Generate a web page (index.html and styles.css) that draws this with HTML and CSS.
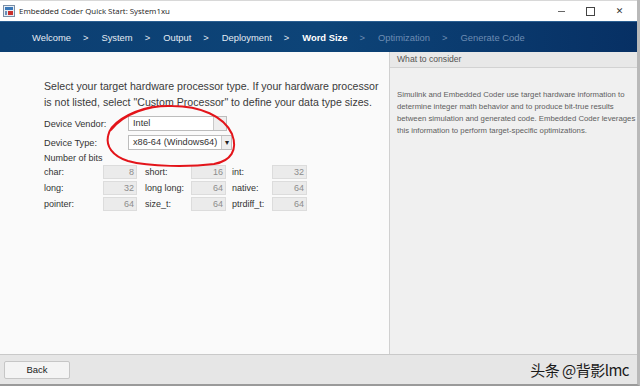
FILE: index.html
```html
<!DOCTYPE html>
<html>
<head>
<meta charset="utf-8">
<link rel="stylesheet" href="styles.css">
</head>
<body>
<div class="window">
  <div class="titlebar">
    <svg class="appicon" width="12" height="12" viewBox="0 0 12 12">
      <rect x="0.5" y="0.5" width="11" height="11" fill="#e8eef5" stroke="#7a8ea6"/>
      <rect x="2" y="2" width="8" height="3" fill="#3a78b8"/>
      <rect x="5" y="6" width="5" height="4" fill="#c9302c"/>
      <rect x="2" y="6" width="2" height="4" fill="#6a8fb8"/>
    </svg>
    <span class="title">Embedded Coder Quick Start: System1xu</span>
    <div class="winctl">
      <span class="ctl min"></span>
      <span class="ctl max"></span>
      <span class="ctl close">✕</span>
    </div>
  </div>
  <div class="nav">
    <span class="step">Welcome</span><span class="sep">&gt;</span>
    <span class="step">System</span><span class="sep">&gt;</span>
    <span class="step">Output</span><span class="sep">&gt;</span>
    <span class="step">Deployment</span><span class="sep">&gt;</span>
    <span class="step current">Word Size</span><span class="sep dim">&gt;</span>
    <span class="step dim">Optimization</span><span class="sep dim">&gt;</span>
    <span class="step dim">Generate Code</span>
  </div>
  <div class="main">
    <div class="left">
      <p class="intro">Select your target hardware processor type. If your hardware processor is not listed, select "Custom Processor" to define your data type sizes.</p>
      <div class="row">
        <span class="lbl">Device Vendor:</span>
        <span class="select vendor"><span class="val">Intel</span><span class="arrow"></span></span>
      </div>
      <div class="row">
        <span class="lbl">Device Type:</span>
        <span class="select dtype"><span class="val">x86-64 (Windows64)</span><span class="arrow">▾</span></span>
      </div>
      <div class="bits-title">Number of bits</div>
      <div class="bits">
        <span class="bl">char:</span><span class="box">8</span>
        <span class="bl c2">short:</span><span class="box">16</span>
        <span class="bl c3">int:</span><span class="box">32</span>
        <span class="bl">long:</span><span class="box">32</span>
        <span class="bl c2">long long:</span><span class="box">64</span>
        <span class="bl c3">native:</span><span class="box">64</span>
        <span class="bl">pointer:</span><span class="box">64</span>
        <span class="bl c2">size_t:</span><span class="box">64</span>
        <span class="bl c3">ptrdiff_t:</span><span class="box">64</span>
      </div>
    </div>
    <div class="right">
      <div class="rhead">What to consider</div>
      <p class="rtext">Simulink and Embedded Coder use target hardware information to determine integer math behavior and to produce bit-true results between simulation and generated code. Embedded Coder leverages this information to perform target-specific optimizations.</p>
    </div>
  </div>
  <div class="footer">
    <button class="back">Back</button>
    <span class="watermark">头条 @背影lmc</span>
  </div>
  <svg class="scribble" width="640" height="386" viewBox="0 0 640 386">
    <path d="M111,130 C124,113 150,105 172,106 C200,106 224,116 232,134 C238,150 231,161 214,164 C190,167 150,167 128,161 C112,156 106,146 108,136 C110,124 128,112 152,107" fill="none" stroke="#e3141a" stroke-width="2" stroke-linecap="round"/>
  </svg>
</div>
</body>
</html>
```
FILE: styles.css
```css
* { box-sizing: border-box; }
html, body { margin: 0; padding: 0; }
body {
  width: 640px;
  height: 386px;
  overflow: hidden;
  font-family: "Liberation Sans", Arial, sans-serif;
  background: #ffffff;
}
.window {
  position: relative;
  width: 640px;
  height: 386px;
  display: flex;
  flex-direction: column;
  border-right: 3px solid #b9b9b9;
  border-bottom: 2px solid #9a9a9a;
}
.titlebar {
  height: 21px;
  flex: none;
  display: flex;
  align-items: center;
  padding-left: 3px;
  background: #ffffff;
  border-top: 1px solid #d8d8d8;
}
.appicon { flex: none; }
.title {
  margin-left: 4px;
  font-family: "Open Sans", "Noto Sans", sans-serif;
  font-size: 7.9px;
  color: #222;
}
.winctl {
  margin-left: auto;
  display: flex;
  align-items: center;
  height: 100%;
}
.ctl {
  width: 29px;
  display: flex;
  justify-content: center;
  align-items: center;
  color: #333;
}
.ctl.min::before { content: ""; width: 7px; height: 1px; background: #666; display: block; }
.ctl.max::before { content: ""; width: 7px; height: 7px; border: 1px solid #444; display: block; }
.ctl.close { font-size: 9px; margin-right: 3px; font-family: "DejaVu Sans", sans-serif; }
.nav {
  height: 31px;
  flex: none;
  display: flex;
  align-items: center;
  padding-left: 32px;
  background: linear-gradient(90deg, #0c3f72 0%, #0d4478 50%, #073064 100%);
  border-top: 1px solid #2b5f92;
  font-size: 9.4px;
  color: #e4ebf3;
}
.step { white-space: nowrap; }
.sep { margin: 0 13px 0 12px; }
.current { font-weight: bold; color: #ffffff; }
.dim { color: #6d8db3; }
.main {
  flex: 1;
  display: flex;
  min-height: 0;
  border-bottom: 1px solid #c9c9c9;
}
.left {
  width: 389px;
  flex: none;
  background: #fafafa;
  padding: 26px 0 0 44px;
  color: #333;
}
.intro {
  margin: 0 0 4px 0;
  font-size: 10.6px;
  line-height: 16px;
  width: 340px;
  color: #3a3a3a;
}
.row {
  display: flex;
  align-items: center;
  height: 19px;
  font-size: 9.2px;
}
.lbl { width: 84px; color: #333; white-space: nowrap; }
.select {
  display: flex;
  align-items: stretch;
  height: 15px;
  border: 1px solid #bdbdbd;
  background: #fff;
  font-size: 9.2px;
  white-space: nowrap;
}
.select .val { padding: 0 4px; line-height: 13px; }
.select .arrow {
  width: 13px;
  border-left: 1px solid #c9c9c9;
  background: #eeeeee;
  font-size: 8px;
  text-align: center;
  line-height: 13px;
  color: #222;
}
.vendor { width: 99px; }
.vendor .val { flex: 1; }
.dtype { width: 104px; }
.dtype .val { flex: 1; }
.bits-title {
  margin-top: 1px;
  font-size: 9px;
  line-height: 11px;
}
.bits {
  display: grid;
  grid-template-columns: 59px 34px 54px 35px 46px 35px;
  grid-auto-rows: 16px;
  font-size: 9px;
  color: #333;
  align-items: center;
}
.bl { white-space: nowrap; }
.bl.c2 { padding-left: 8px; }
.bl.c3 { padding-left: 6px; }
.box {
  height: 14px;
  background: #ebebeb;
  border: 1px solid #dcdcdc;
  text-align: right;
  padding-right: 2px;
  color: #8d8d8d;
  line-height: 12px;
}
.right {
  flex: 1;
  background: #f0f0f0;
  border-left: 1px solid #d0d0d0;
  min-width: 0;
}
.rhead {
  height: 16px;
  background: #e8e8e8;
  border-bottom: 1px solid #d2d2d2;
  font-size: 8.6px;
  line-height: 15px;
  padding-left: 7px;
  color: #555;
}
.rtext {
  margin: 21px -4px 0 7px;
  font-size: 7.75px;
  line-height: 12px;
  color: #5e5e5e;
}
.footer {
  height: 29px;
  flex: none;
  display: flex;
  align-items: center;
  background: #e6e6e6;
  padding-left: 4px;
}
.back {
  width: 66px;
  height: 18px;
  background: #f4f4f4;
  border: 1px solid #c6c6c6;
  border-radius: 2px;
  font-family: "Liberation Sans", Arial, sans-serif;
  font-size: 9.5px;
  color: #222;
  padding: 0;
}
.watermark {
  margin-left: auto;
  margin-right: 8px;
  font-family: "Noto Sans CJK SC", "Liberation Sans", sans-serif;
  font-size: 15px;
  color: #1a1a1a;
  letter-spacing: -0.5px;
}
.scribble {
  position: absolute;
  left: 0;
  top: 0;
  pointer-events: none;
}
```
